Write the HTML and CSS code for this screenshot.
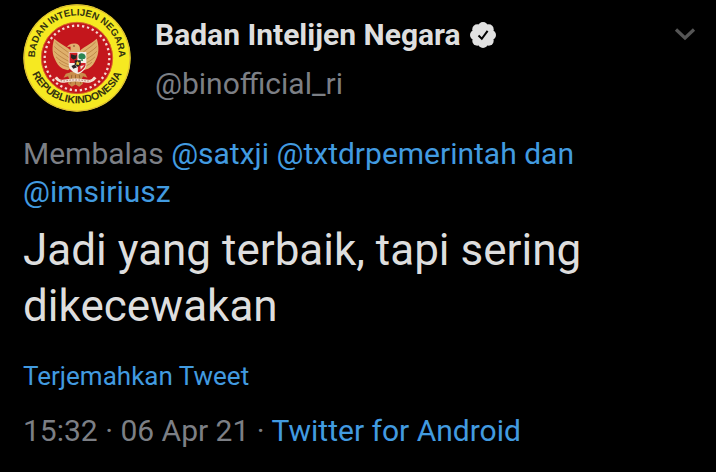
FILE: index.html
```html
<!DOCTYPE html>
<html lang="id">
<head>
<meta charset="utf-8">
<meta name="viewport" content="width=device-width, initial-scale=1">
<title>Badan Intelijen Negara</title>
<link rel="stylesheet" href="styles.css">
</head>
<body>
<article class="tweet">
  <header class="header">
    <svg class="avatar" viewBox="-162 -162 324 324" aria-hidden="true">
      <defs>
        <path id="arc-top" d="M-122 30A126 126 0 1 1 122 30"/>
        <path id="arc-bottom" d="M-146 -10A146 146 0 0 0 146 -10"/>
        <g id="wing">
          <path fill="#dfb06c" d="M-9-6C-12-24-36-30-61-51C-65-38-69-16-60 2C-55 15-48 24-38 30L-24 34L-10 22Z"/>
          <path fill="none" stroke="#b57c3e" stroke-width="2" d="M-58-42C-46-28-28-20-16-7M-61-30C-49-17-32-10-20 1M-61-17C-49-4-36 2-22 10M-56-2C-46 8-36 13-22 19M-48 12C-40 20-32 22-20 26"/>
          <path fill="#c98d4b" d="M-12 38L-30 43L-36 54L-24 50L-20 60L-10 52L-4 58L-2 42Z"/>
        </g>
      </defs>
      <circle r="161" fill="#f6e921"/>
      <circle r="159" fill="none" stroke="#d9b43a" stroke-width="3"/>
      <circle r="107" fill="#c4161c"/>
      <circle r="107" fill="none" stroke="#d8642a" stroke-width="3"/>
      <circle class="stars" r="97" pathLength="360"/>
      <text class="seal-text"><textPath href="#arc-top" startOffset="50%">BADAN INTELIJEN NEGARA</textPath></text>
      <text class="seal-text seal-text-bottom"><textPath href="#arc-bottom" startOffset="50%">REPUBLIKINDONESIA</textPath></text>
      <g transform="translate(0 -1) scale(1.12)">
        <use href="#wing"/>
        <use href="#wing" transform="translate(-8 0) scale(-1 1)"/>
        <path fill="#c98d4b" d="M-18 38L10 38L16 70L6 78L-4 72L-14 78L-24 70Z"/>
        <path fill="none" stroke="#8c5a2b" stroke-width="2" d="M-14 46L-17 70M-4 46V72M6 46L10 70"/>
        <path fill="#e2b070" d="M-20-10C-16-22-17-28-18-30L-27-28C-24-35-15-39-5-38C6-37 9-29 8-20L13-10L8 0H-18Z"/>
        <circle cx="-8" cy="-31" r="2" fill="#5b3215"/>
        <path fill="none" stroke="#f3dfcf" stroke-width="8" d="M-57 53C-44 72-28 58-4 60C20 58 36 72 49 53"/>
        <path fill="none" stroke="#9a5a48" stroke-width="2" stroke-dasharray="4 4" d="M-44 61C-34 66-24 58-4 60C16 58 26 66 36 61"/>
        <path fill="#f4eee6" d="M-22-15H25V20C22 34 10 41 2 44C-8 40-22 32-22 20Z"/>
        <path fill="#cf2027" d="M-20-13H1V14H-20ZM2 14H23V20C20 31 10 37 2 40Z"/>
        <path fill="#f4eee6" d="M-16 16H1V38C-8 34-16 28-18 20Z"/>
        <path fill="#252323" d="M-16-9L-4-6L0-9L-2 2L-10 5L-16 0ZM-15 22L-6 18L0 26L-10 30Z"/>
        <path fill="#2b8652" d="M4-4C4-14 20-14 23-4C24 2 19 5 15 3L16 9H11L12 4C7 5 3 2 4-4Z"/>
        <path fill="#252323" d="M-6 7H10V18L2 25L-6 18Z"/>
        <path fill="#f2d23f" d="M2 9L4 13H8L5 16L6 20L2 18L-2 20L-1 16L-4 13H0Z"/>
        <path fill="#eee5dc" d="M9 22L20 20L10 32Z"/>
      </g>
    </svg>
    <div class="author">
      <h1 class="name">Badan Intelijen Negara
        <svg class="badge" viewBox="0 0 26 26" role="img" aria-label="Akun terverifikasi">
          <g fill="#e1e1e1"><circle cx="13" cy="13" r="10"/><circle cx="13" cy="5" r="5"/><circle cx="18.7" cy="7.3" r="5"/><circle cx="21" cy="13" r="5"/><circle cx="18.7" cy="18.7" r="5"/><circle cx="13" cy="21" r="5"/><circle cx="7.3" cy="18.7" r="5"/><circle cx="5" cy="13" r="5"/><circle cx="7.3" cy="7.3" r="5"/></g>
          <path d="M8.5 13.5L11.8 16.8L17.6 8.8" fill="none" stroke="#000" stroke-width="2"/>
        </svg>
      </h1>
      <a class="handle" href="#">@binofficial_ri</a>
    </div>
    <button class="more" type="button" aria-label="Opsi lainnya">
      <svg class="chevron" viewBox="0 0 22 14" aria-hidden="true"><path d="M2 2.5L11 11L20 2.5" fill="none" stroke="#555" stroke-width="3.2"/></svg>
    </button>
  </header>
  <p class="reply">Membalas <a href="#">@satxji</a> <a href="#">@txtdrpemerintah</a> <a href="#">dan</a> <a href="#">@imsiriusz</a></p>
  <p class="body">Jadi yang terbaik, tapi sering dikecewakan</p>
  <button class="translate" type="button">Terjemahkan Tweet</button>
  <footer class="meta">15:32 · 06 Apr 21 · <a href="#">Twitter for Android</a></footer>
</article>
</body>
</html>
```
FILE: styles.css
```css
* { box-sizing: border-box; }
body {
  margin: 0;
  background: #000;
  color: #dedede;
  font-family: Roboto, "Liberation Sans", sans-serif;
}
a { color: #429be0; text-decoration: none; }
button {
  padding: 0;
  border: 0;
  background: none;
  font-family: inherit;
}
.tweet { padding: 4px 20px 20px 23px; }
.header { display: flex; align-items: flex-start; }
.avatar { flex: none; width: 108px; height: 108px; }
.stars {
  fill: none;
  stroke: #f5d9d2;
  stroke-width: 7;
  stroke-dasharray: 4 5;
}
.seal-text {
  fill: #34330f;
  font-family: "Liberation Sans", sans-serif;
  font-size: 29px;
  font-weight: 700;
  text-anchor: middle;
}
.seal-text-bottom { font-size: 32px; }
.author { flex: 1; margin-left: 24px; padding-top: 11px; }
.name {
  display: flex;
  align-items: center;
  gap: 9px;
  margin: 0;
  font-size: 30px;
  line-height: 40px;
  font-weight: 700;
}
.badge { width: 26px; height: 26px; }
.handle {
  display: block;
  margin-top: 9px;
  color: #7c7f85;
  font-size: 30px;
  line-height: 40px;
}
.more { margin-top: 23px; }
.chevron { display: block; width: 22px; height: 14px; }
.reply {
  margin: 23px 0 0;
  color: #7c7f85;
  font-size: 30px;
  line-height: 38px;
}
.body {
  margin: 11px 0 0;
  font-size: 44px;
  line-height: 56px;
}
.translate {
  display: block;
  margin-top: 26px;
  color: #429be0;
  font-size: 26px;
  line-height: 32px;
}
.meta {
  margin-top: 20px;
  color: #7c7f85;
  font-size: 30px;
  line-height: 38px;
}
```
